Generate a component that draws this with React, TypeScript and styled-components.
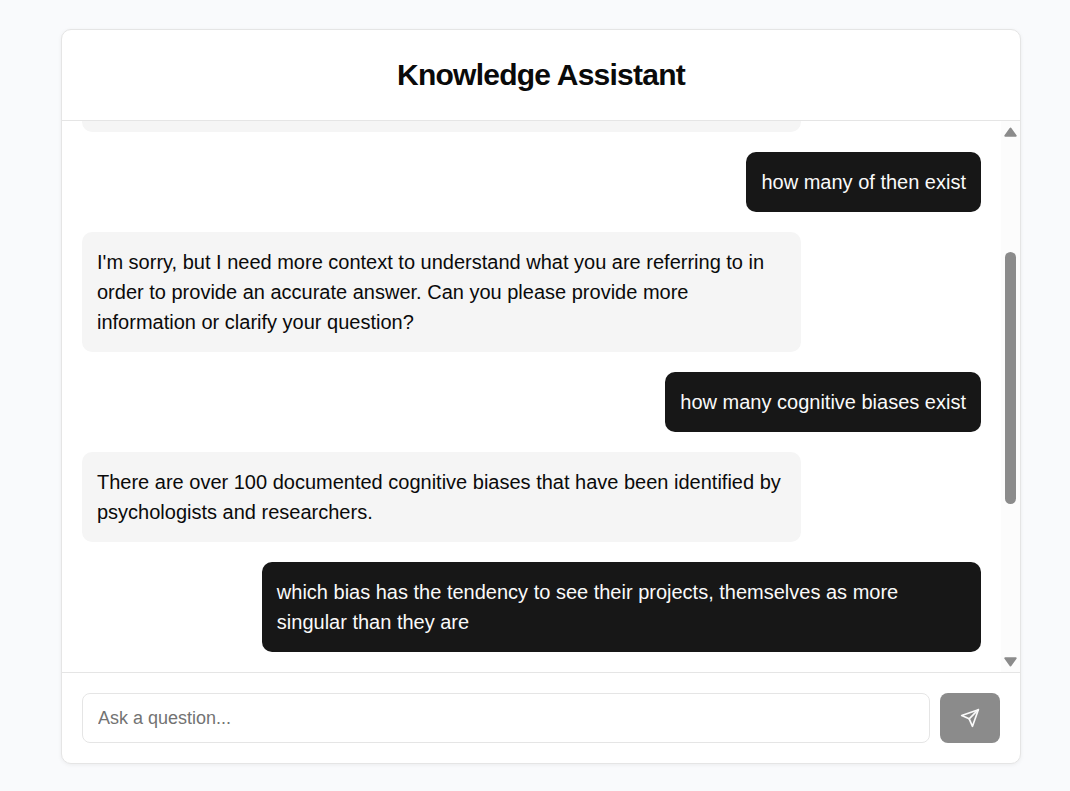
import React, { useState } from 'react';
import styled, { createGlobalStyle } from 'styled-components';

const GlobalStyle = createGlobalStyle`
  *, *::before, *::after { box-sizing: border-box; }
  body {
    margin: 0;
    background: #f9fafc;
    color: #0a0a0a;
    font-family: "Liberation Sans", Arial, Helvetica, sans-serif;
  }
`;

const Page = styled.main`
  display: flex;
  height: 100vh;
  padding: 29px 49px 27px 61px;
`;

const Card = styled.section`
  display: flex;
  flex: 1;
  flex-direction: column;
  min-width: 0;
  overflow: hidden;
  background: #fff;
  border: 1px solid #e5e5e5;
  border-radius: 10px;
  box-shadow: 0 1px 4px rgba(0, 0, 0, 0.06);
`;

const Header = styled.header`
  padding: 25px 20px;
  border-bottom: 1px solid #e5e5e5;
  text-align: center;
`;

const Title = styled.h1`
  margin: 0;
  font-size: 30px;
  font-weight: 700;
  line-height: 40px;
  letter-spacing: -0.025em;
`;

const Conversation = styled.div`
  display: flex;
  flex: 1;
  min-height: 0;
`;

const Messages = styled.div`
  display: flex;
  flex: 1;
  flex-direction: column;
  justify-content: flex-end;
  gap: 20px;
  min-width: 0;
  padding: 0 20px 20px;
  overflow: hidden;
`;

const Bubble = styled.div<{ $mine?: boolean }>`
  flex-shrink: 0;
  align-self: ${(p) => (p.$mine ? 'flex-end' : 'flex-start')};
  max-width: 80%;
  padding: 15px;
  border-radius: 10px;
  background: ${(p) => (p.$mine ? '#171717' : '#f5f5f5')};
  color: ${(p) => (p.$mine ? '#fafafa' : '#0a0a0a')};
  font-size: 20px;
  line-height: 30px;
`;

const EarlierBubble = styled(Bubble)`
  width: 80%;
`;

const ScrollBar = styled.div`
  display: flex;
  flex-direction: column;
  align-items: center;
  width: 19px;
  padding: 6px 0 5px;
  background: #fcfcfc;
`;

const Track = styled.div`
  display: flex;
  flex: 1;
  flex-direction: column;
  margin: 5px 0;
`;

const TrackSpace = styled.div<{ $share: number }>`
  flex: ${(p) => p.$share} 1 0;
`;

const Thumb = styled.div`
  flex: 251 1 0;
  width: 11px;
  border-radius: 6px;
  background: #8b8b8b;
`;

const Arrow = styled.svg`
  display: block;
  width: 13px;
  height: 10px;
  fill: #8b8b8b;
  stroke: #8b8b8b;
  stroke-width: 2;
  stroke-linejoin: round;
`;

const Composer = styled.form`
  display: flex;
  gap: 10px;
  padding: 20px;
  border-top: 1px solid #e5e5e5;
`;

const QuestionInput = styled.input`
  flex: 1;
  min-width: 0;
  height: 50px;
  padding: 0 15px;
  border: 1px solid #e5e5e5;
  border-radius: 8px;
  background: #fff;
  color: #0a0a0a;
  font-family: inherit;
  font-size: 18px;
  &::placeholder { color: #737373; opacity: 1; }
`;

const SendButton = styled.button`
  display: flex;
  align-items: center;
  justify-content: center;
  width: 60px;
  height: 50px;
  padding: 0;
  border: 0;
  border-radius: 8px;
  background: #8b8b8b;
  color: #fafafa;
`;

const messages = [
  { mine: true, text: 'how many of then exist' },
  {
    mine: false,
    text: "I'm sorry, but I need more context to understand what you are referring to in order to provide an accurate answer. Can you please provide more information or clarify your question?",
  },
  { mine: true, text: 'how many cognitive biases exist' },
  {
    mine: false,
    text: 'There are over 100 documented cognitive biases that have been identified by psychologists and researchers.',
  },
  {
    mine: true,
    text: 'which bias has the tendency to see their projects, themselves as more singular than they are',
  },
];

export default function App() {
  const [question, setQuestion] = useState('');

  return (
    <>
      <GlobalStyle />
      <Page>
        <Card>
          <Header>
            <Title>Knowledge Assistant</Title>
          </Header>
          <Conversation>
            <Messages>
              <EarlierBubble />
              {messages.map((m) => (
                <Bubble key={m.text} $mine={m.mine}>{m.text}</Bubble>
              ))}
            </Messages>
            <ScrollBar aria-hidden="true">
              <Arrow viewBox="0 0 13 10"><path d="M6.5 1.5 L11.7 8.8 H1.3 Z" /></Arrow>
              <Track>
                <TrackSpace $share={110} />
                <Thumb />
                <TrackSpace $share={148} />
              </Track>
              <Arrow viewBox="0 0 13 10"><path d="M1.3 1.2 H11.7 L6.5 8.5 Z" /></Arrow>
            </ScrollBar>
          </Conversation>
          <Composer onSubmit={(e) => e.preventDefault()}>
            <QuestionInput
              type="text"
              aria-label="Ask a question"
              placeholder="Ask a question..."
              value={question}
              onChange={(e) => setQuestion(e.target.value)}
            />
            <SendButton type="submit" aria-label="Send" disabled={!question}>
              <svg
                width="20"
                height="20"
                viewBox="0 0 24 24"
                fill="none"
                stroke="currentColor"
                strokeWidth="2"
                strokeLinecap="round"
                strokeLinejoin="round"
              >
                <path d="m22 2-7 20-4-9-9-4Z" />
                <path d="M22 2 11 13" />
              </svg>
            </SendButton>
          </Composer>
        </Card>
      </Page>
    </>
  );
}
